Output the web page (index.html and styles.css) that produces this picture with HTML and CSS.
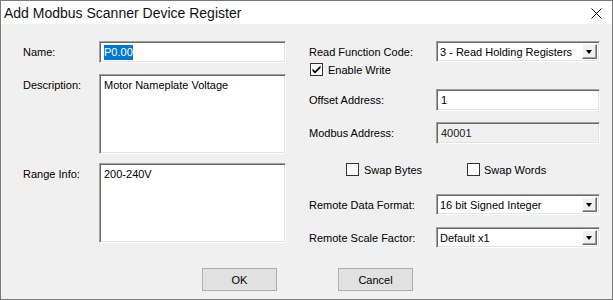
FILE: index.html
```html
<!DOCTYPE html>
<html lang="en">

<head>
    <meta charset="UTF-8">
    <title>Add Modbus Scanner Device Register</title>
    <link rel="stylesheet" href="styles.css">
</head>

<body>
    <div class="vindue">
        <div class="titel">
            <span>Add Modbus Scanner Device Register</span>
            <svg class="luk" width="11" height="11" viewBox="0 0 11 11">
                <path d="M0.5 0.5 L10.5 10.5 M10.5 0.5 L0.5 10.5" stroke="#000" stroke-width="1" fill="none" />
            </svg>
        </div>

        <div class="indhold">
            <div class="venstre">
                <div class="raekke">
                    <label>Name:</label>
                    <div class="felt navn"><span class="markeret">P0.00</span></div>
                </div>
                <div class="raekke top beskr">
                    <label>Description:</label>
                    <div class="felt stor">Motor Nameplate Voltage</div>
                </div>
                <div class="raekke top range">
                    <label>Range Info:</label>
                    <div class="felt stor">200-240V</div>
                </div>
            </div>

            <div class="hoejre">
                <div class="raekke">
                    <label>Read Function Code:</label>
                    <div class="felt valg">3 - Read Holding Registers<span class="pil"></span></div>
                </div>
                <div class="tjek enable">
                    <span class="boks">
                        <svg width="11" height="11" viewBox="0 0 11 11">
                            <path d="M1.5 4.5 L4 7 L9.5 1.5 L9.5 4 L4 9.5 L1.5 7 Z" fill="#000" />
                        </svg>
                    </span>
                    Enable Write
                </div>
                <div class="raekke offset">
                    <label>Offset Address:</label>
                    <div class="felt">1</div>
                </div>
                <div class="raekke modbus">
                    <label>Modbus Address:</label>
                    <div class="felt graa">40001</div>
                </div>
                <div class="swap">
                    <div class="tjek bytes"><span class="boks"></span>Swap Bytes</div>
                    <div class="tjek"><span class="boks"></span>Swap Words</div>
                </div>
                <div class="raekke format">
                    <label>Remote Data Format:</label>
                    <div class="felt valg">16 bit Signed Integer<span class="pil"></span></div>
                </div>
                <div class="raekke skala">
                    <label>Remote Scale Factor:</label>
                    <div class="felt valg">Default x1<span class="pil"></span></div>
                </div>
            </div>
        </div>

        <div class="knapper">
            <button>OK</button>
            <button>Cancel</button>
        </div>
    </div>
</body></html>
```

FILE: styles.css
```css
body {
    margin: 0;
    font-family: "Liberation Sans", Arial, sans-serif;
    font-size: 11px;
    color: #000;
}

.vindue {
    width: 613px;
    height: 300px;
    box-sizing: border-box;
    border: 1px solid #7a7a7a;
    background-color: #f0f0f0;
}

.titel {
    height: 23px;
    background-color: #fff;
    display: flex;
    align-items: center;
    justify-content: space-between;
    padding: 0 10px 0 3px;
    font-size: 14px;
    color: #111;
}

.luk {
    margin-top: 1px;
}

.indhold {
    display: flex;
    align-items: flex-start;
    gap: 23px;
    padding: 17px 0 0 22px;
}

.venstre {
    width: 263px;
}

.hoejre {
    width: 291px;
}

.raekke {
    display: flex;
    align-items: center;
}

.raekke.top {
    align-items: flex-start;
}

.raekke.top label {
    padding-top: 5px;
}

.venstre label {
    width: 76px;
    flex: none;
}

.hoejre label {
    width: 127px;
    flex: none;
}

.felt {
    box-sizing: border-box;
    height: 22px;
    flex: 1;
    background-color: #fff;
    border: 1px solid;
    border-color: #a0a0a0 #fff #fff #a0a0a0;
    box-shadow: inset 1px 1px 0 #696969, inset -1px -1px 0 #e3e3e3;
    padding: 4px 4px 0;
    white-space: nowrap;
    position: relative;
}

.stor {
    height: 80px;
}

.beskr {
    margin-top: 11px;
}

.range {
    margin-top: 9px;
}

.markeret {
    background-color: #0078d7;
    color: #fff;
    padding: 1px 0 2px;
}

.valg {
    height: 21px;
    padding-left: 3px;
}

.pil {
    position: absolute;
    right: 2px;
    top: 2px;
    width: 15px;
    height: 15px;
    box-sizing: border-box;
    background-color: #f0f0f0;
    border: 1px solid;
    border-color: #fff #696969 #696969 #fff;
    box-shadow: inset -1px -1px 0 #a0a0a0;
}

.pil::after {
    content: "";
    position: absolute;
    left: 3px;
    top: 5px;
    border-left: 3.5px solid transparent;
    border-right: 3.5px solid transparent;
    border-top: 4px solid #000;
}

.graa {
    background-color: #f0f0f0;
    color: #222;
}

.tjek {
    display: flex;
    align-items: center;
    height: 13px;
}

.boks {
    width: 13px;
    height: 13px;
    box-sizing: border-box;
    border: 1px solid #333;
    background-color: #fff;
    margin-right: 5px;
    display: flex;
    align-items: center;
    justify-content: center;
}

.enable {
    margin: 1px 0 0 1px;
}

.offset {
    margin-top: 13px;
}

.modbus {
    margin-top: 11px;
}

.swap {
    display: flex;
    margin: 19px 0 0 37px;
}

.bytes {
    width: 121px;
}

.swap .tjek:last-child .boks {
    margin-right: 4px;
}

.format {
    margin-top: 18px;
}

.skala {
    margin-top: 12px;
}

.knapper {
    display: flex;
    gap: 61px;
    margin-top: 20px;
    padding-left: 201px;
}

button {
    width: 75px;
    height: 23px;
    background-color: #e1e1e1;
    border: 1px solid #adadad;
    font-family: "Liberation Sans", Arial, sans-serif;
    font-size: 11px;
    color: #000;
    padding: 0;
}
```
